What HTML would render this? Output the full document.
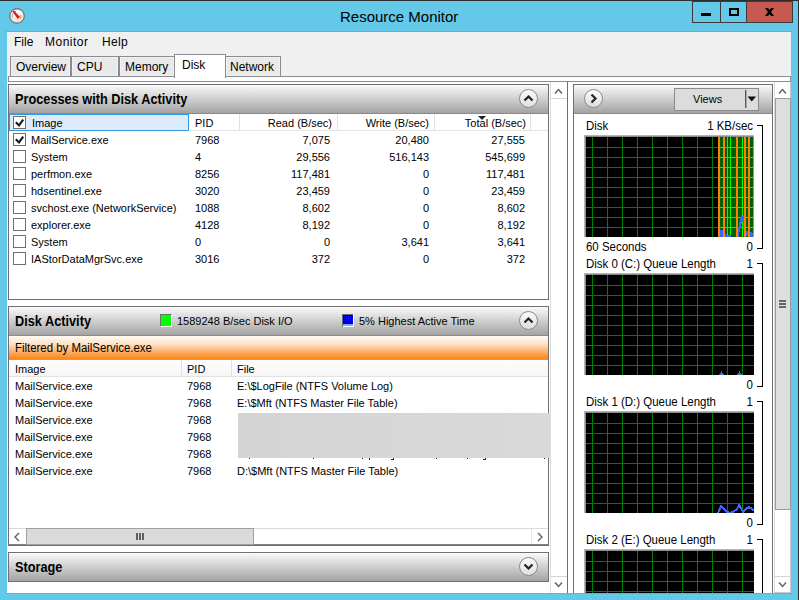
<!DOCTYPE html>
<html><head><meta charset="utf-8">
<style>
*{box-sizing:border-box;margin:0;padding:0}
html,body{width:799px;height:600px;overflow:hidden}
body{position:relative;background:#64c8e8;font-family:"Liberation Sans",sans-serif;font-size:11px;color:#000}
.a{position:absolute}
.t{position:absolute;white-space:nowrap;line-height:13px;height:13px}
.r{text-align:right}
.b{font-weight:bold}
</style></head><body>
<!-- window frame -->
<div class="a" style="left:0;top:0;width:799px;height:1px;background:#2e2e2e"></div>
<div class="a" style="left:798px;top:0;width:1px;height:600px;background:#2e2e2e"></div>
<!-- title icon -->
<svg class="a" style="left:9px;top:8px" width="16" height="16" viewBox="0 0 16 16">
 <defs><linearGradient id="ig" x1="0" y1="0" x2="0" y2="1"><stop offset="0" stop-color="#ffffff"/><stop offset="1" stop-color="#e6e2da"/></linearGradient></defs>
 <circle cx="8" cy="8" r="7.9" fill="#7a7a7a"/>
 <circle cx="8" cy="8" r="6.6" fill="url(#ig)"/>
 <path d="M3.3 9.5 A5 5 0 0 1 7 3.3" stroke="#8fa08f" stroke-width="0.9" fill="none"/>
 <path d="M11.6 7.2 L12 9.6 L10.8 10.6" stroke="#f08020" stroke-width="1" fill="none"/>
 <polygon points="3.4,3.6 4.9,2.5 11,9 8.8,11" fill="#e01818"/>
</svg>
<div class="t" style="left:340px;top:8px;font-size:15.3px;line-height:18px;height:18px;color:#000;transform:scaleX(0.98);transform-origin:0 0">Resource Monitor</div>
<!-- caption buttons -->
<div class="a" style="left:692px;top:1px;width:29px;height:22px;border:1px solid #3a3a3a;background:#64c8e8"></div>
<div class="a" style="left:721px;top:1px;width:26px;height:22px;border:1px solid #3a3a3a;border-left:none;background:#64c8e8"></div>
<div class="a" style="left:746px;top:1px;width:47px;height:22px;border:1px solid #3a3a3a;background:#c75a50"></div>
<div class="a" style="left:701px;top:13px;width:10px;height:3px;background:#000"></div>
<div class="a" style="left:729px;top:8px;width:10px;height:8px;border:2px solid #000"></div>
<svg class="a" style="left:765px;top:8px" width="9" height="8" viewBox="0 0 9 8"><path d="M0 0 H3 L9 8 H6 Z" fill="#000"/><path d="M9 0 H6 L0 8 H3 Z" fill="#000"/></svg>

<!-- client -->
<div class="a" style="left:7px;top:32px;width:784px;height:561px;background:#f0f0f0"></div>
<div class="a" style="left:6px;top:31px;width:786px;height:1px;background:#76aac6"></div>
<div class="a" style="left:6px;top:593px;width:786px;height:1px;background:#76aac6"></div>
<div class="a" style="left:7px;top:82px;width:784px;height:511px;background:#fff"></div>
<!-- menu -->
<div class="t" style="left:14px;top:36px;font-size:12px">File</div>
<div class="t" style="left:45px;top:36px;font-size:12px;letter-spacing:0.5px">Monitor</div>
<div class="t" style="left:102px;top:36px;font-size:12px;letter-spacing:0.3px">Help</div>

<!-- tab page strip -->
<div class="a" style="left:8px;top:76px;width:783px;height:6px;border:1px solid #8a8c94;background:#fff"></div>
<!-- tabs -->
<div class="a" style="left:10px;top:56px;width:61px;height:21px;border:1px solid #8a8c94;background:#e9e9e9;box-shadow:inset 0 0 0 1px #f2f2f2"></div>
<div class="a" style="left:71px;top:56px;width:48px;height:21px;border:1px solid #8a8c94;background:#e9e9e9;box-shadow:inset 0 0 0 1px #f2f2f2"></div>
<div class="a" style="left:119px;top:56px;width:56px;height:21px;border:1px solid #8a8c94;background:#e9e9e9;box-shadow:inset 0 0 0 1px #f2f2f2"></div>
<div class="a" style="left:225px;top:56px;width:56px;height:21px;border:1px solid #8a8c94;background:#e9e9e9;box-shadow:inset 0 0 0 1px #f2f2f2"></div>
<div class="a" style="left:174px;top:54px;width:52px;height:24px;border:1px solid #8a8c94;border-bottom:none;background:#fff"></div>
<div class="t" style="left:16px;top:61px;font-size:12px">Overview</div>
<div class="t" style="left:77px;top:61px;font-size:12px">CPU</div>
<div class="t" style="left:125px;top:61px;font-size:12px">Memory</div>
<div class="t" style="left:182px;top:59px;font-size:12px">Disk</div>
<div class="t" style="left:230px;top:61px;font-size:12px">Network</div>

<!-- ===== Processes panel ===== -->
<div class="a" style="left:8px;top:84px;width:541px;height:216px;border:1px solid #707070;background:#fff"></div>
<div class="a" style="left:9px;top:85px;width:539px;height:29px;background:linear-gradient(#fafafa,#a3a3a3);border-bottom:1px solid #8a8a8a"></div>
<div class="t b" style="left:15px;top:91px;font-size:14.4px;line-height:16px;height:16px;transform:scaleX(0.885);transform-origin:0 0">Processes with Disk Activity</div>
<div class="a" style="left:519px;top:89px;width:19px;height:19px;border-radius:50%;border:1px solid #8a8a8a;background:linear-gradient(#fbfbfb,#dedede)"></div>
<svg class="a" style="left:523px;top:93px" width="11" height="11" viewBox="0 0 11 11"><path d="M1.5 7.5 L5.5 3.5 L9.5 7.5" stroke="#222" stroke-width="2.2" fill="none"/></svg>

<!-- header row -->
<div class="a" style="left:9px;top:114px;width:539px;height:17px;background:#fff;border-bottom:1px solid #e5e5e5"></div>
<div class="a" style="left:9px;top:114px;width:180px;height:17px;background:#dcebfc;border:1px solid #3399e0"></div>
<div class="a" style="left:239px;top:114px;width:1px;height:16px;background:#e0e0e0"></div>
<div class="a" style="left:337px;top:114px;width:1px;height:16px;background:#e0e0e0"></div>
<div class="a" style="left:434px;top:114px;width:1px;height:16px;background:#e0e0e0"></div>
<div class="a" style="left:530px;top:114px;width:1px;height:16px;background:#e0e0e0"></div>
<div class="t" style="left:32px;top:117px">Image</div>
<div class="t" style="left:195px;top:117px">PID</div>
<div class="t r" style="left:232px;top:117px;width:100px">Read (B/sec)</div>
<div class="t r" style="left:329px;top:117px;width:100px">Write (B/sec)</div>
<div class="t r" style="left:426px;top:117px;width:100px">Total (B/sec)</div>
<svg class="a" style="left:478px;top:116px" width="8" height="4"><path d="M0 0 H8 L4 4 Z" fill="#222"/></svg>

<svg class="a" style="left:13px;top:116px" width="13" height="13" viewBox="0 0 13 13"><rect x="0.5" y="0.5" width="12" height="12" fill="#fff" stroke="#707070"/><path d="M2.8 6.2 L6 9.4 L10.2 3.6" stroke="#1a1a1a" stroke-width="2.1" fill="none"/></svg>
<svg class="a" style="left:13px;top:133px" width="13" height="13" viewBox="0 0 13 13"><rect x="0.5" y="0.5" width="12" height="12" fill="#fff" stroke="#707070"/><path d="M2.8 6.2 L6 9.4 L10.2 3.6" stroke="#1a1a1a" stroke-width="2.1" fill="none"/></svg>
<div class="t" style="left:31px;top:134px">MailService.exe</div>
<div class="t" style="left:195px;top:134px">7968</div>
<div class="t r" style="left:230px;top:134px;width:100px">7,075</div>
<div class="t r" style="left:329px;top:134px;width:100px">20,480</div>
<div class="t r" style="left:425px;top:134px;width:100px">27,555</div>
<svg class="a" style="left:13px;top:150px" width="13" height="13" viewBox="0 0 13 13"><rect x="0.5" y="0.5" width="12" height="12" fill="#fff" stroke="#707070"/></svg>
<div class="t" style="left:31px;top:151px">System</div>
<div class="t" style="left:195px;top:151px">4</div>
<div class="t r" style="left:230px;top:151px;width:100px">29,556</div>
<div class="t r" style="left:329px;top:151px;width:100px">516,143</div>
<div class="t r" style="left:425px;top:151px;width:100px">545,699</div>
<svg class="a" style="left:13px;top:167px" width="13" height="13" viewBox="0 0 13 13"><rect x="0.5" y="0.5" width="12" height="12" fill="#fff" stroke="#707070"/></svg>
<div class="t" style="left:31px;top:168px">perfmon.exe</div>
<div class="t" style="left:195px;top:168px">8256</div>
<div class="t r" style="left:230px;top:168px;width:100px">117,481</div>
<div class="t r" style="left:329px;top:168px;width:100px">0</div>
<div class="t r" style="left:425px;top:168px;width:100px">117,481</div>
<svg class="a" style="left:13px;top:184px" width="13" height="13" viewBox="0 0 13 13"><rect x="0.5" y="0.5" width="12" height="12" fill="#fff" stroke="#707070"/></svg>
<div class="t" style="left:31px;top:185px">hdsentinel.exe</div>
<div class="t" style="left:195px;top:185px">3020</div>
<div class="t r" style="left:230px;top:185px;width:100px">23,459</div>
<div class="t r" style="left:329px;top:185px;width:100px">0</div>
<div class="t r" style="left:425px;top:185px;width:100px">23,459</div>
<svg class="a" style="left:13px;top:201px" width="13" height="13" viewBox="0 0 13 13"><rect x="0.5" y="0.5" width="12" height="12" fill="#fff" stroke="#707070"/></svg>
<div class="t" style="left:31px;top:202px">svchost.exe (NetworkService)</div>
<div class="t" style="left:195px;top:202px">1088</div>
<div class="t r" style="left:230px;top:202px;width:100px">8,602</div>
<div class="t r" style="left:329px;top:202px;width:100px">0</div>
<div class="t r" style="left:425px;top:202px;width:100px">8,602</div>
<svg class="a" style="left:13px;top:218px" width="13" height="13" viewBox="0 0 13 13"><rect x="0.5" y="0.5" width="12" height="12" fill="#fff" stroke="#707070"/></svg>
<div class="t" style="left:31px;top:219px">explorer.exe</div>
<div class="t" style="left:195px;top:219px">4128</div>
<div class="t r" style="left:230px;top:219px;width:100px">8,192</div>
<div class="t r" style="left:329px;top:219px;width:100px">0</div>
<div class="t r" style="left:425px;top:219px;width:100px">8,192</div>
<svg class="a" style="left:13px;top:235px" width="13" height="13" viewBox="0 0 13 13"><rect x="0.5" y="0.5" width="12" height="12" fill="#fff" stroke="#707070"/></svg>
<div class="t" style="left:31px;top:236px">System</div>
<div class="t" style="left:195px;top:236px">0</div>
<div class="t r" style="left:230px;top:236px;width:100px">0</div>
<div class="t r" style="left:329px;top:236px;width:100px">3,641</div>
<div class="t r" style="left:425px;top:236px;width:100px">3,641</div>
<svg class="a" style="left:13px;top:252px" width="13" height="13" viewBox="0 0 13 13"><rect x="0.5" y="0.5" width="12" height="12" fill="#fff" stroke="#707070"/></svg>
<div class="t" style="left:31px;top:253px">IAStorDataMgrSvc.exe</div>
<div class="t" style="left:195px;top:253px">3016</div>
<div class="t r" style="left:230px;top:253px;width:100px">372</div>
<div class="t r" style="left:329px;top:253px;width:100px">0</div>
<div class="t r" style="left:425px;top:253px;width:100px">372</div>

<!-- ===== Disk Activity panel ===== -->
<div class="a" style="left:8px;top:306px;width:541px;height:240px;border:1px solid #707070;background:#fff"></div>
<div class="a" style="left:9px;top:307px;width:539px;height:29px;background:linear-gradient(#fafafa,#a3a3a3);border-bottom:1px solid #8a8a8a"></div>
<div class="t b" style="left:15px;top:313px;font-size:14.4px;line-height:16px;height:16px;transform:scaleX(0.885);transform-origin:0 0">Disk Activity</div>
<div class="a" style="left:160px;top:314px;width:12px;height:13px;border-top:1px solid #6e6e6e;border-left:1px solid #6e6e6e;border-right:1px solid #fff;border-bottom:1px solid #fff;background:#00ff00"></div>
<div class="t" style="left:177px;top:315px">1589248 B/sec Disk I/O</div>
<svg class="a" style="left:342px;top:314px" width="12" height="13" shape-rendering="crispEdges"><rect x="0" y="0" width="12" height="13" fill="#fff"/><rect x="0" y="0" width="11" height="1" fill="#6e6e6e"/><rect x="0" y="0" width="1" height="13" fill="#6e6e6e"/><rect x="1" y="1" width="10" height="9" fill="#0000ff"/><rect x="1" y="10" width="10" height="2" fill="#6ab0ff"/><rect x="1" y="1" width="1" height="1" fill="#000"/><rect x="1" y="3" width="1" height="1" fill="#000"/><rect x="1" y="5" width="1" height="1" fill="#000"/><rect x="1" y="7" width="1" height="1" fill="#000"/><rect x="1" y="9" width="1" height="1" fill="#000"/><rect x="3" y="1" width="1" height="1" fill="#000"/><rect x="3" y="3" width="1" height="1" fill="#000"/><rect x="3" y="5" width="1" height="1" fill="#000"/><rect x="3" y="7" width="1" height="1" fill="#000"/><rect x="3" y="9" width="1" height="1" fill="#000"/><rect x="5" y="1" width="1" height="1" fill="#000"/><rect x="5" y="3" width="1" height="1" fill="#000"/><rect x="5" y="5" width="1" height="1" fill="#000"/><rect x="5" y="7" width="1" height="1" fill="#000"/><rect x="5" y="9" width="1" height="1" fill="#000"/><rect x="7" y="1" width="1" height="1" fill="#000"/><rect x="7" y="3" width="1" height="1" fill="#000"/><rect x="7" y="5" width="1" height="1" fill="#000"/><rect x="7" y="7" width="1" height="1" fill="#000"/><rect x="7" y="9" width="1" height="1" fill="#000"/><rect x="9" y="1" width="1" height="1" fill="#000"/><rect x="9" y="3" width="1" height="1" fill="#000"/><rect x="9" y="5" width="1" height="1" fill="#000"/><rect x="9" y="7" width="1" height="1" fill="#000"/><rect x="9" y="9" width="1" height="1" fill="#000"/></svg>
<div class="t" style="left:359px;top:315px">5% Highest Active Time</div>
<div class="a" style="left:519px;top:311px;width:19px;height:19px;border-radius:50%;border:1px solid #8a8a8a;background:linear-gradient(#fbfbfb,#dedede)"></div>
<svg class="a" style="left:523px;top:315px" width="11" height="11" viewBox="0 0 11 11"><path d="M1.5 7.5 L5.5 3.5 L9.5 7.5" stroke="#222" stroke-width="2.2" fill="none"/></svg>
<!-- orange filter bar -->
<div class="a" style="left:9px;top:336px;width:539px;height:23px;background:linear-gradient(#fffaf4 0%,#fde2c6 35%,#fca555 75%,#fb8618 100%)"></div>
<div class="t" style="left:15px;top:341px;font-size:12px;line-height:14px;height:14px;transform:scaleX(0.95);transform-origin:0 0">Filtered by MailService.exe</div>
<!-- header -->
<div class="a" style="left:9px;top:359px;width:539px;height:1px;background:#a0a4a6"></div>
<div class="a" style="left:9px;top:360px;width:539px;height:17px;background:linear-gradient(#fdfdfd,#f6f6f6);border-bottom:1px solid #e3e3e3"></div>
<div class="a" style="left:181px;top:360px;width:1px;height:16px;background:#e0e0e0"></div>
<div class="a" style="left:231px;top:360px;width:1px;height:16px;background:#e0e0e0"></div>
<div class="t" style="left:15px;top:363px">Image</div>
<div class="t" style="left:187px;top:363px">PID</div>
<div class="t" style="left:237px;top:363px">File</div>
<div class="t" style="left:15px;top:380px">MailService.exe</div>
<div class="t" style="left:187px;top:380px">7968</div>
<div class="t" style="left:237px;top:380px">E:\$LogFile (NTFS Volume Log)</div>
<div class="t" style="left:15px;top:397px">MailService.exe</div>
<div class="t" style="left:187px;top:397px">7968</div>
<div class="t" style="left:237px;top:397px">E:\$Mft (NTFS Master File Table)</div>
<div class="t" style="left:15px;top:414px">MailService.exe</div>
<div class="t" style="left:187px;top:414px">7968</div>
<div class="t" style="left:15px;top:431px">MailService.exe</div>
<div class="t" style="left:187px;top:431px">7968</div>
<div class="t" style="left:15px;top:448px">MailService.exe</div>
<div class="t" style="left:187px;top:448px">7968</div>
<div class="t" style="left:15px;top:465px">MailService.exe</div>
<div class="t" style="left:187px;top:465px">7968</div>
<div class="t" style="left:237px;top:465px">D:\$Mft (NTFS Master File Table)</div>
<div class="a" style="left:238px;top:413px;width:313px;height:45px;background:linear-gradient(90deg,#d4d4d4,#d9d9d9)"></div>
<div class="a" style="left:249px;top:458px;width:1px;height:1px;background:#222"></div><div class="a" style="left:313px;top:458px;width:1px;height:1px;background:#222"></div><div class="a" style="left:362px;top:458px;width:1px;height:1px;background:#222"></div><div class="a" style="left:369px;top:458px;width:1px;height:2px;background:#222"></div><div class="a" style="left:391px;top:459px;width:3px;height:1px;background:#222"></div><div class="a" style="left:393px;top:458px;width:1px;height:1px;background:#222"></div><div class="a" style="left:436px;top:458px;width:1px;height:1px;background:#222"></div><div class="a" style="left:467px;top:458px;width:1px;height:1px;background:#222"></div><div class="a" style="left:483px;top:459px;width:3px;height:1px;background:#222"></div><div class="a" style="left:485px;top:458px;width:1px;height:1px;background:#222"></div><div class="a" style="left:544px;top:458px;width:1px;height:1px;background:#222"></div>
<!-- hscroll -->
<div class="a" style="left:9px;top:528px;width:539px;height:17px;background:#fff;border-top:1px solid #dadada;border-bottom:1px solid #808080"></div>
<div class="a" style="left:26px;top:528px;width:228px;height:17px;background:#dadada;border:1px solid #a0a0a0"></div>
<div class="a" style="left:531px;top:529px;width:1px;height:15px;background:#e8e8e8"></div>

<!-- ===== Storage panel ===== -->
<div class="a" style="left:8px;top:552px;width:541px;height:30px;border:1px solid #707070;background:linear-gradient(#fafafa,#a3a3a3)"></div>
<div class="t b" style="left:15px;top:559px;font-size:14.4px;line-height:16px;height:16px;transform:scaleX(0.885);transform-origin:0 0">Storage</div>
<div class="a" style="left:519px;top:557px;width:19px;height:19px;border-radius:50%;border:1px solid #8a8a8a;background:linear-gradient(#fbfbfb,#dedede)"></div>
<svg class="a" style="left:523px;top:561px" width="11" height="11" viewBox="0 0 11 11"><path d="M1.5 3.5 L5.5 7.5 L9.5 3.5" stroke="#222" stroke-width="2.2" fill="none"/></svg>

<!-- left vscroll -->
<div class="a" style="left:550px;top:82px;width:18px;height:511px;background:#fff;border-left:1px solid #dcdcdc;border-right:1px solid #6e6e6e"></div>
<div class="a" style="left:551px;top:98px;width:16px;height:1px;background:#d4d4d4"></div>
<div class="a" style="left:551px;top:576px;width:16px;height:1px;background:#d4d4d4"></div>
<svg class="a" style="left:554px;top:87px" width="10" height="8"><path d="M1 6.5 L4.5 2.5 L8 6.5" stroke="#606060" stroke-width="1.4" fill="none"/></svg>
<svg class="a" style="left:554px;top:581px" width="10" height="8"><path d="M1 1.5 L4.5 5.5 L8 1.5" stroke="#606060" stroke-width="1.4" fill="none"/></svg>
<!-- hscroll arrows -->
<svg class="a" style="left:13px;top:532px" width="8" height="10"><path d="M6 1 L2 5 L6 9" stroke="#606060" stroke-width="1.4" fill="none"/></svg>
<svg class="a" style="left:536px;top:532px" width="8" height="10"><path d="M2 1 L6 5 L2 9" stroke="#606060" stroke-width="1.4" fill="none"/></svg>
<div class="a" style="left:136px;top:533px;width:2px;height:7px;background:#606060"></div>
<div class="a" style="left:139px;top:533px;width:2px;height:7px;background:#606060"></div>
<div class="a" style="left:142px;top:533px;width:2px;height:7px;background:#606060"></div>

<!-- ===== Right pane ===== -->
<div class="a" style="left:573px;top:84px;width:200px;height:509px;border:1px solid #707070;border-bottom:none;background:#fff"></div>
<div class="a" style="left:574px;top:85px;width:198px;height:29px;background:linear-gradient(#fafafa,#a3a3a3);border-bottom:1px solid #8a8a8a"></div>
<div class="a" style="left:584px;top:89px;width:19px;height:19px;border-radius:50%;border:1px solid #8a8a8a;background:linear-gradient(#fbfbfb,#dedede)"></div>
<svg class="a" style="left:588px;top:93px" width="11" height="11" viewBox="0 0 11 11"><path d="M3.5 1.5 L7.5 5.5 L3.5 9.5" stroke="#222" stroke-width="2.2" fill="none"/></svg>
<div class="a" style="left:674px;top:88px;width:85px;height:23px;border:1px solid #8a8a8a;background:#dcdcdc"></div>
<div class="t" style="left:693px;top:93px;font-size:11px">Views</div>
<div class="a" style="left:745px;top:90px;width:2px;height:18px;background:linear-gradient(90deg,#5a5a5a 50%,#a8a8a8 50%)"></div>
<svg class="a" style="left:747px;top:96px" width="10" height="6"><path d="M0.5 0.5 H9 L4.75 5.5 Z" fill="#111"/></svg>

<div class="a" style="left:0;top:0;width:799px;height:593px;overflow:hidden"><div class="t" style="left:586px;top:119px;font-size:12px;line-height:14px;height:14px;transform:scaleX(0.955);transform-origin:0 0">Disk</div>
<div class="t r" style="left:653px;top:119px;width:100px;font-size:12px;line-height:14px;height:14px;transform:scaleX(0.955);transform-origin:100% 0">1 KB/sec</div>
<div class="a" style="left:757px;top:125px;width:6px;height:1px;background:#000"></div>
<div class="a" style="left:762px;top:125px;width:1px;height:123px;background:#000"></div>
<div class="a" style="left:757px;top:248px;width:6px;height:1px;background:#000"></div>
<svg class="a" style="left:584px;top:135px" width="170" height="102" shape-rendering="crispEdges"><rect x="0" y="0" width="170" height="102" fill="#000"/><rect x="0" y="0" width="170" height="1" fill="#b4b4b4"/><rect x="0" y="1" width="170" height="1" fill="#8c8c8c"/><rect x="0" y="0" width="1" height="102" fill="#b4b4b4"/><rect x="1" y="1" width="1" height="101" fill="#8c8c8c"/><rect x="8" y="2" width="1" height="100" fill="#008000"/><rect x="23" y="2" width="1" height="100" fill="#008000"/><rect x="38" y="2" width="1" height="100" fill="#008000"/><rect x="53" y="2" width="1" height="100" fill="#008000"/><rect x="68" y="2" width="1" height="100" fill="#008000"/><rect x="83" y="2" width="1" height="100" fill="#008000"/><rect x="98" y="2" width="1" height="100" fill="#008000"/><rect x="113" y="2" width="1" height="100" fill="#008000"/><rect x="128" y="2" width="1" height="100" fill="#008000"/><rect x="143" y="2" width="1" height="100" fill="#008000"/><rect x="158" y="2" width="1" height="100" fill="#008000"/><rect x="2" y="12" width="168" height="1" fill="#008000"/><rect x="2" y="22" width="168" height="1" fill="#008000"/><rect x="2" y="32" width="168" height="1" fill="#008000"/><rect x="2" y="42" width="168" height="1" fill="#008000"/><rect x="2" y="52" width="168" height="1" fill="#008000"/><rect x="2" y="62" width="168" height="1" fill="#008000"/><rect x="2" y="72" width="168" height="1" fill="#008000"/><rect x="2" y="82" width="168" height="1" fill="#008000"/><rect x="2" y="92" width="168" height="1" fill="#008000"/><rect x="134" y="2" width="36" height="100" fill="#006000"/><rect x="134" y="12" width="36" height="1" fill="#00ff00"/><rect x="134" y="22" width="36" height="1" fill="#00ff00"/><rect x="134" y="32" width="36" height="1" fill="#00ff00"/><rect x="134" y="42" width="36" height="1" fill="#00ff00"/><rect x="134" y="52" width="36" height="1" fill="#00ff00"/><rect x="134" y="62" width="36" height="1" fill="#00ff00"/><rect x="134" y="72" width="36" height="1" fill="#00ff00"/><rect x="134" y="82" width="36" height="1" fill="#00ff00"/><rect x="134" y="92" width="36" height="1" fill="#00ff00"/><rect x="143" y="2" width="1" height="100" fill="#00ff00"/><rect x="146" y="2" width="1" height="100" fill="#00ff00"/><rect x="158" y="2" width="1" height="100" fill="#00ff00"/><polygon points="136,102 136,95 139,95 139,102" fill="#3c64ff"/><polygon points="141,102 141,99 143,99 143,100 147,100 147,102" fill="#3c64ff"/><polygon points="154,102 154,94 155,90 156,85 157,80 160,80 160,94 159,94 159,87 158,87 157,91 156,95 155,99 155,102" fill="#3c64ff"/><polygon points="162,101 162,96 165,96 165,101" fill="#3c64ff"/><polygon points="166,102 166,97 169,98 169,102" fill="#3c64ff"/><rect x="134" y="2" width="2" height="100" fill="#ff8000"/><rect x="139" y="2" width="2" height="100" fill="#ff8000"/><rect x="152" y="2" width="2" height="100" fill="#ff8000"/><rect x="160" y="2" width="2" height="100" fill="#ff8000"/><rect x="164" y="2" width="2" height="100" fill="#ff8000"/><rect x="169" y="2" width="1" height="100" fill="#ff8000"/></svg>
<div class="t" style="left:586px;top:240px;font-size:12px;line-height:14px;height:14px;transform:scaleX(0.955);transform-origin:0 0">60 Seconds</div>
<div class="t r" style="left:653px;top:240px;width:100px;font-size:12px;line-height:14px;height:14px;transform:scaleX(0.955);transform-origin:100% 0">0</div>
<div class="t" style="left:586px;top:257px;font-size:12px;line-height:14px;height:14px;transform:scaleX(0.955);transform-origin:0 0">Disk 0 (C:) Queue Length</div>
<div class="t r" style="left:653px;top:257px;width:100px;font-size:12px;line-height:14px;height:14px;transform:scaleX(0.955);transform-origin:100% 0">1</div>
<div class="a" style="left:757px;top:263px;width:6px;height:1px;background:#000"></div>
<div class="a" style="left:762px;top:263px;width:1px;height:123px;background:#000"></div>
<div class="a" style="left:757px;top:386px;width:6px;height:1px;background:#000"></div>
<svg class="a" style="left:584px;top:273px" width="170" height="102" shape-rendering="crispEdges"><rect x="0" y="0" width="170" height="102" fill="#000"/><rect x="0" y="0" width="170" height="1" fill="#b4b4b4"/><rect x="0" y="1" width="170" height="1" fill="#8c8c8c"/><rect x="0" y="0" width="1" height="102" fill="#b4b4b4"/><rect x="1" y="1" width="1" height="101" fill="#8c8c8c"/><rect x="8" y="2" width="1" height="100" fill="#008000"/><rect x="23" y="2" width="1" height="100" fill="#008000"/><rect x="38" y="2" width="1" height="100" fill="#008000"/><rect x="53" y="2" width="1" height="100" fill="#008000"/><rect x="68" y="2" width="1" height="100" fill="#008000"/><rect x="83" y="2" width="1" height="100" fill="#008000"/><rect x="98" y="2" width="1" height="100" fill="#008000"/><rect x="113" y="2" width="1" height="100" fill="#008000"/><rect x="128" y="2" width="1" height="100" fill="#008000"/><rect x="143" y="2" width="1" height="100" fill="#008000"/><rect x="158" y="2" width="1" height="100" fill="#008000"/><rect x="2" y="12" width="168" height="1" fill="#008000"/><rect x="2" y="22" width="168" height="1" fill="#008000"/><rect x="2" y="32" width="168" height="1" fill="#008000"/><rect x="2" y="42" width="168" height="1" fill="#008000"/><rect x="2" y="52" width="168" height="1" fill="#008000"/><rect x="2" y="62" width="168" height="1" fill="#008000"/><rect x="2" y="72" width="168" height="1" fill="#008000"/><rect x="2" y="82" width="168" height="1" fill="#008000"/><rect x="2" y="92" width="168" height="1" fill="#008000"/><polygon points="135,102 137.5,98 140,102" fill="#3c64ff"/><polygon points="153,102 155.5,98 158,102" fill="#3c64ff"/></svg>
<div class="t r" style="left:653px;top:378px;width:100px;font-size:12px;line-height:14px;height:14px;transform:scaleX(0.955);transform-origin:100% 0">0</div>
<div class="t" style="left:586px;top:395px;font-size:12px;line-height:14px;height:14px;transform:scaleX(0.955);transform-origin:0 0">Disk 1 (D:) Queue Length</div>
<div class="t r" style="left:653px;top:395px;width:100px;font-size:12px;line-height:14px;height:14px;transform:scaleX(0.955);transform-origin:100% 0">1</div>
<div class="a" style="left:757px;top:401px;width:6px;height:1px;background:#000"></div>
<div class="a" style="left:762px;top:401px;width:1px;height:123px;background:#000"></div>
<div class="a" style="left:757px;top:524px;width:6px;height:1px;background:#000"></div>
<svg class="a" style="left:584px;top:411px" width="170" height="102" shape-rendering="crispEdges"><rect x="0" y="0" width="170" height="102" fill="#000"/><rect x="0" y="0" width="170" height="1" fill="#b4b4b4"/><rect x="0" y="1" width="170" height="1" fill="#8c8c8c"/><rect x="0" y="0" width="1" height="102" fill="#b4b4b4"/><rect x="1" y="1" width="1" height="101" fill="#8c8c8c"/><rect x="8" y="2" width="1" height="100" fill="#008000"/><rect x="23" y="2" width="1" height="100" fill="#008000"/><rect x="38" y="2" width="1" height="100" fill="#008000"/><rect x="53" y="2" width="1" height="100" fill="#008000"/><rect x="68" y="2" width="1" height="100" fill="#008000"/><rect x="83" y="2" width="1" height="100" fill="#008000"/><rect x="98" y="2" width="1" height="100" fill="#008000"/><rect x="113" y="2" width="1" height="100" fill="#008000"/><rect x="128" y="2" width="1" height="100" fill="#008000"/><rect x="143" y="2" width="1" height="100" fill="#008000"/><rect x="158" y="2" width="1" height="100" fill="#008000"/><rect x="2" y="12" width="168" height="1" fill="#008000"/><rect x="2" y="22" width="168" height="1" fill="#008000"/><rect x="2" y="32" width="168" height="1" fill="#008000"/><rect x="2" y="42" width="168" height="1" fill="#008000"/><rect x="2" y="52" width="168" height="1" fill="#008000"/><rect x="2" y="62" width="168" height="1" fill="#008000"/><rect x="2" y="72" width="168" height="1" fill="#008000"/><rect x="2" y="82" width="168" height="1" fill="#008000"/><rect x="2" y="92" width="168" height="1" fill="#008000"/><polyline points="134,102 137,95 139,97 143,101 146,102 149,101 153,98 155,94 157,97 159,101 162,98 165,96 168,98 170,100" fill="none" stroke="#3c64ff" stroke-width="2"/></svg>
<div class="t r" style="left:653px;top:516px;width:100px;font-size:12px;line-height:14px;height:14px;transform:scaleX(0.955);transform-origin:100% 0">0</div>
<div class="t" style="left:586px;top:533px;font-size:12px;line-height:14px;height:14px;transform:scaleX(0.955);transform-origin:0 0">Disk 2 (E:) Queue Length</div>
<div class="t r" style="left:653px;top:533px;width:100px;font-size:12px;line-height:14px;height:14px;transform:scaleX(0.955);transform-origin:100% 0">1</div>
<div class="a" style="left:757px;top:539px;width:6px;height:1px;background:#000"></div>
<div class="a" style="left:762px;top:539px;width:1px;height:123px;background:#000"></div>
<div class="a" style="left:757px;top:662px;width:6px;height:1px;background:#000"></div>
<svg class="a" style="left:584px;top:549px" width="170" height="102" shape-rendering="crispEdges"><rect x="0" y="0" width="170" height="102" fill="#000"/><rect x="0" y="0" width="170" height="1" fill="#b4b4b4"/><rect x="0" y="1" width="170" height="1" fill="#8c8c8c"/><rect x="0" y="0" width="1" height="102" fill="#b4b4b4"/><rect x="1" y="1" width="1" height="101" fill="#8c8c8c"/><rect x="8" y="2" width="1" height="100" fill="#008000"/><rect x="23" y="2" width="1" height="100" fill="#008000"/><rect x="38" y="2" width="1" height="100" fill="#008000"/><rect x="53" y="2" width="1" height="100" fill="#008000"/><rect x="68" y="2" width="1" height="100" fill="#008000"/><rect x="83" y="2" width="1" height="100" fill="#008000"/><rect x="98" y="2" width="1" height="100" fill="#008000"/><rect x="113" y="2" width="1" height="100" fill="#008000"/><rect x="128" y="2" width="1" height="100" fill="#008000"/><rect x="143" y="2" width="1" height="100" fill="#008000"/><rect x="158" y="2" width="1" height="100" fill="#008000"/><rect x="2" y="12" width="168" height="1" fill="#008000"/><rect x="2" y="22" width="168" height="1" fill="#008000"/><rect x="2" y="32" width="168" height="1" fill="#008000"/><rect x="2" y="42" width="168" height="1" fill="#008000"/><rect x="2" y="52" width="168" height="1" fill="#008000"/><rect x="2" y="62" width="168" height="1" fill="#008000"/><rect x="2" y="72" width="168" height="1" fill="#008000"/><rect x="2" y="82" width="168" height="1" fill="#008000"/><rect x="2" y="92" width="168" height="1" fill="#008000"/></svg>
<div class="t r" style="left:653px;top:654px;width:100px;font-size:12px;line-height:14px;height:14px;transform:scaleX(0.955);transform-origin:100% 0">0</div></div>

<!-- right vscroll -->
<div class="a" style="left:774px;top:82px;width:17px;height:511px;background:#fff;border-left:1px solid #dcdcdc;border-right:1px solid #cfcaca;border-bottom:1px solid #cfcaca"></div>
<div class="a" style="left:775px;top:98px;width:16px;height:412px;background:#dedede;border:1px solid #9a9a9a"></div>
<div class="a" style="left:775px;top:576px;width:16px;height:1px;background:#d4d4d4"></div>
<svg class="a" style="left:778px;top:87px" width="10" height="8"><path d="M1 6.5 L4.5 2.5 L8 6.5" stroke="#606060" stroke-width="1.4" fill="none"/></svg>
<svg class="a" style="left:778px;top:581px" width="10" height="8"><path d="M1 1.5 L4.5 5.5 L8 1.5" stroke="#606060" stroke-width="1.4" fill="none"/></svg>
<div class="a" style="left:779px;top:300px;width:7px;height:2px;background:#666"></div>
<div class="a" style="left:779px;top:303px;width:7px;height:2px;background:#666"></div>
<div class="a" style="left:779px;top:306px;width:7px;height:2px;background:#666"></div>
</body></html>
